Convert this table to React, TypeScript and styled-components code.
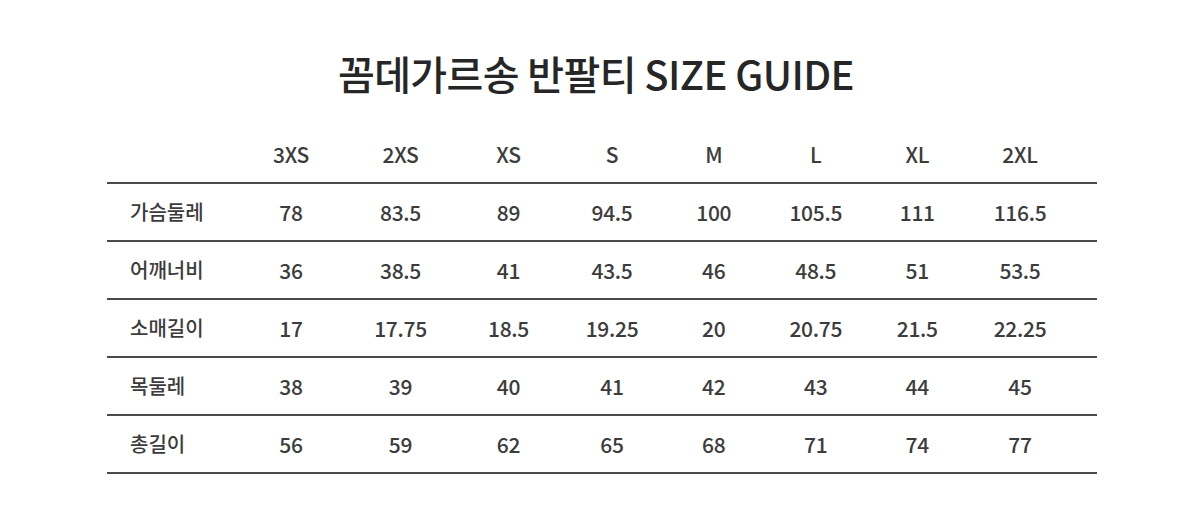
import React from "react";
import styled, { createGlobalStyle } from "styled-components";

const GlobalStyle = createGlobalStyle`
  html, body {
    margin: 0;
    padding: 0;
    background: #ffffff;
  }
  body {
    font-family: "Noto Sans CJK KR", "Noto Sans", sans-serif;
    color: #333333;
  }
`;

const Page = styled.div`
  width: 1200px;
  height: 525px;
  padding-top: 49px;
  box-sizing: border-box;
  background: #ffffff;
`;

const Title = styled.h1`
  margin: 0 0 31px 0;
  padding-right: 8px;
  text-align: center;
  font-family: "Noto Sans CJK KR", "Noto Sans", sans-serif;
  font-size: 40px;
  line-height: 48px;
  font-weight: 500;
  color: #262626;
  letter-spacing: -0.6px;
`;

const Table = styled.div`
  margin-left: 107px;
  width: 990px;
`;

const COLS = "129.5px 109px 110px 106px 101px 102.5px 101.5px 101.5px 104px 1fr";

const Row = styled.div<{ $header?: boolean }>`
  display: grid;
  grid-template-columns: ${COLS};
  align-items: center;
  height: ${(p) => (p.$header ? "51px" : "55px")};
  padding-bottom: ${(p) => (p.$header ? "3px" : "1px")};
  box-sizing: content-box;
  border-bottom: 2px solid #4a4a4a;
`;

const Label = styled.div`
  padding-left: 23px;
  font-size: 20px;
  font-weight: 500;
  color: #3c3c3c;
  white-space: nowrap;
`;

const Cell = styled.div`
  text-align: center;
  font-size: 21px;
  font-weight: 500;
  color: #3c3c3c;
  letter-spacing: -0.3px;
  white-space: nowrap;
`;

const sizes = ["3XS", "2XS", "XS", "S", "M", "L", "XL", "2XL"];

const rows: { label: string; values: string[] }[] = [
  { label: "가슴둘레", values: ["78", "83.5", "89", "94.5", "100", "105.5", "111", "116.5"] },
  { label: "어깨너비", values: ["36", "38.5", "41", "43.5", "46", "48.5", "51", "53.5"] },
  { label: "소매길이", values: ["17", "17.75", "18.5", "19.25", "20", "20.75", "21.5", "22.25"] },
  { label: "목둘레", values: ["38", "39", "40", "41", "42", "43", "44", "45"] },
  { label: "총길이", values: ["56", "59", "62", "65", "68", "71", "74", "77"] },
];

export default function App() {
  return (
    <>
      <GlobalStyle />
      <Page>
        <Title>꼼데가르송 반팔티 SIZE GUIDE</Title>
        <Table>
          <Row $header>
            <Label />
            {sizes.map((s) => (
              <Cell key={s}>{s}</Cell>
            ))}
          </Row>
          {rows.map((r) => (
            <Row key={r.label}>
              <Label>{r.label}</Label>
              {r.values.map((v, i) => (
                <Cell key={i}>{v}</Cell>
              ))}
            </Row>
          ))}
        </Table>
      </Page>
    </>
  );
}
